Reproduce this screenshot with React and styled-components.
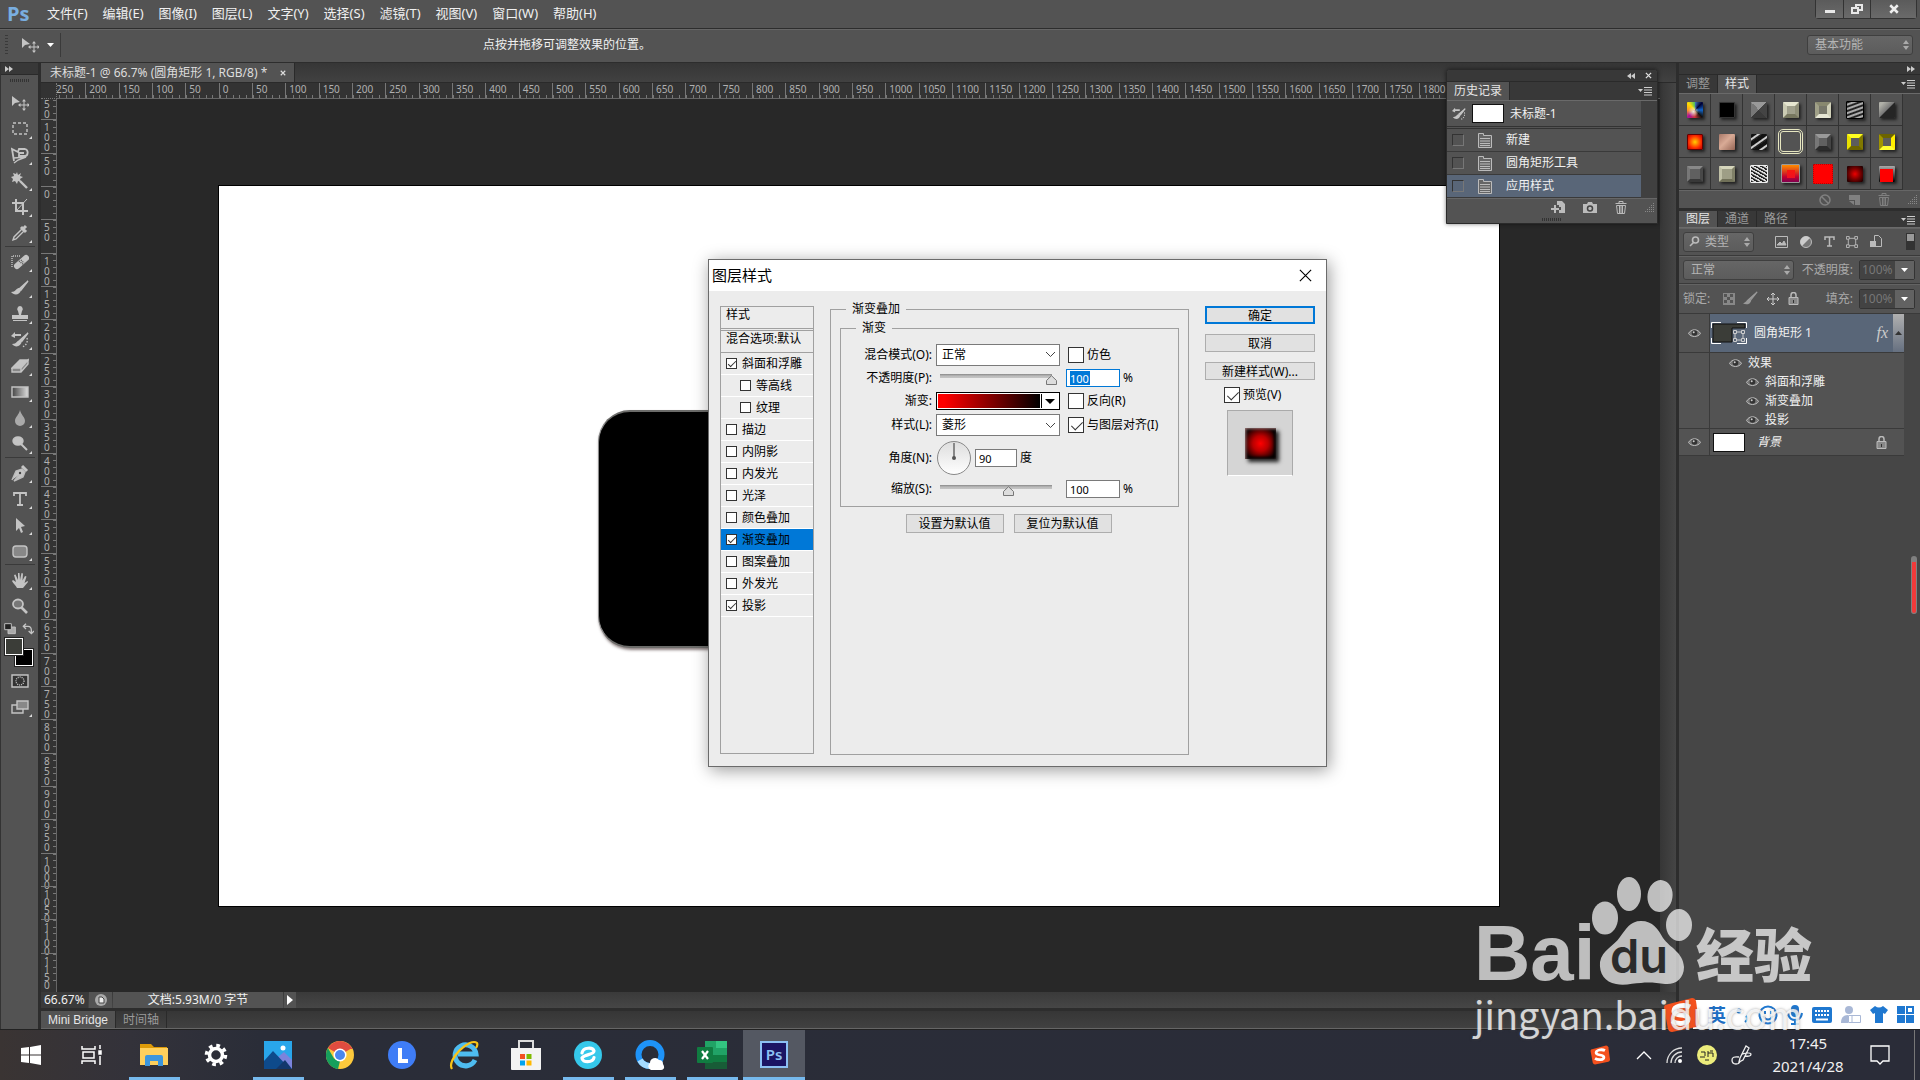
import React from "react";
import styled, { createGlobalStyle, css } from "styled-components";

const GlobalStyle = createGlobalStyle`
  * {
    box-sizing: border-box;
  }
  body {
    margin: 0;
    background: #282828;
    font-family: "Noto Sans", "Noto Sans CJK SC", sans-serif;
    font-size: 12px;
    line-height: 16px;
  }
  button, input, select {
    font: inherit;
    color: inherit;
    margin: 0;
    padding: 0;
  }
  svg {
    display: block;
    flex-shrink: 0;
  }
`;

const Page = styled.div`
  position: relative;
  display: flex;
  flex-direction: column;
  height: 100vh;
  overflow: hidden;
  color: #f0f0f0;
`;

const PlainButton = styled.button`
  display: flex;
  align-items: center;
  justify-content: center;
  border: 0;
  background: none;
  color: inherit;
`;

/* ---------- top bars ---------- */

const MenuBar = styled.header`
  display: flex;
  align-items: center;
  flex: none;
  height: 29px;
  padding-left: 7px;
  background: #535353;
  border-bottom: 1px solid #2d2d2d;
`;

const PsMark = styled.span`
  width: 40px;
  font-family: "Open Sans", sans-serif;
  font-size: 20px;
  font-weight: 700;
  line-height: 24px;
  color: #79aee0;
`;

const Menus = styled.nav`
  display: flex;
  gap: 15px;
  margin-bottom: 2px;
`;

const MenuButton = styled(PlainButton)`
  font-size: 13px;
`;

const WindowButtons = styled.div`
  display: flex;
  align-self: flex-start;
  margin-left: auto;
  margin-right: 3px;
  border: 1px solid #333;
  border-top: 0;
  border-radius: 0 0 4px 4px;
`;

const WindowButton = styled(PlainButton)`
  width: ${({ $wide }) => ($wide ? "46px" : "27px")};
  height: 18px;
  background: linear-gradient(#5b5b5b, #6a6a6a);
  & + & {
    border-left: 1px solid #333;
  }
`;

const OptionsBar = styled.div`
  display: flex;
  align-items: center;
  flex: none;
  height: 34px;
  padding: 0 7px 2px 5px;
  background: #535353;
  border-top: 1px solid #666;
  border-bottom: 1px solid #2d2d2d;
`;

const Grip = styled.span`
  width: 3px;
  height: 20px;
  background: repeating-linear-gradient(#3a3a3a 0 1px, transparent 1px 3px);
`;

const ToolPreset = styled(PlainButton)`
  gap: 8px;
  width: 53px;
  height: 24px;
  padding-left: 7px;
  border-right: 1px solid #3a3a3a;
`;

const Hint = styled.p`
  flex: 1;
  margin: 0;
  padding-left: 422px;
`;

const SelectBox = styled.span`
  position: relative;
  display: flex;
  align-items: center;
  width: ${({ $width }) => $width};
  height: ${({ $height }) => $height || "20px"};
  select {
    appearance: none;
    width: 100%;
    height: 100%;
    padding-left: ${({ $pad }) => $pad || "7px"};
    border: 1px solid #3f3f3f;
    border-radius: 3px;
    background: linear-gradient(#666, #5c5c5c);
    color: #b4b4b4;
  }
  svg {
    position: absolute;
    right: 4px;
    pointer-events: none;
  }
  svg + svg {
    right: auto;
    left: 6px;
  }
`;

/* ---------- workspace ---------- */

const Workspace = styled.main`
  display: flex;
  flex: 1;
  min-height: 0;
`;

const Toolbox = styled.aside`
  display: flex;
  flex-direction: column;
  align-items: center;
  flex: none;
  width: 41px;
  background: #535353;
  border-left: 1px solid #333;
  border-right: 3px solid #2d2d2d;
`;

const CollapseBar = styled.div`
  display: flex;
  align-items: center;
  align-self: stretch;
  justify-content: ${({ $end }) => ($end ? "flex-end" : "flex-start")};
  flex: none;
  gap: 10px;
  height: 12px;
  padding: 0 5px 0 4px;
  background: #383838;
  border-bottom: 1px solid #2a2a2a;
`;

const HGrip = styled.span`
  width: 20px;
  height: 3px;
  margin: ${({ $tight }) => ($tight ? "2px auto" : "4px 0 8px")};
  background: repeating-linear-gradient(90deg, #333 0 1px, transparent 1px 2px);
`;

const ToolButton = styled(PlainButton)`
  position: relative;
  width: 36px;
  height: 26px;
  flex: none;
  ${({ $more }) =>
    $more &&
    css`
      &::after {
        content: "";
        position: absolute;
        right: 6px;
        bottom: 3px;
        border-left: 3px solid transparent;
        border-bottom: 3px solid #ddd;
      }
    `}
`;

const ToolDivider = styled.span`
  width: 30px;
  height: 3px;
  flex: none;
  border-top: 1px solid #3a3a3a;
`;

const SwapRow = styled.div`
  display: flex;
  gap: 6px;
  height: 19px;
  align-items: center;
  align-self: flex-start;
  padding-left: 3px;
`;

const Colors = styled.div`
  display: grid;
  align-self: flex-start;
  width: 28px;
  height: 28px;
  margin: 0 0 2px 4px;
`;

const ColorChip = styled.button`
  grid-area: 1 / 1;
  width: 18px;
  height: 17px;
  border: 1px solid #fff;
  outline: 1px solid #222;
  background: ${({ $color }) => $color};
  place-self: ${({ $back }) => ($back ? "end" : "start")};
`;

const Center = styled.section`
  display: flex;
  flex-direction: column;
  flex: 1;
  min-width: 0;
  border-right: 3px solid #2d2d2d;
`;

const TabBar = styled.div`
  display: flex;
  flex: none;
  height: ${({ $height }) => $height || "20px"};
  background: linear-gradient(#363636, #414141);
  border-bottom: 1px solid ${({ $line }) => $line || "#2a2a2a"};
`;

const DocTab = styled.div`
  display: flex;
  align-items: center;
  gap: 13px;
  padding: 1px 8px 0 9px;
  background: #535353;
  border-right: 1px solid #2a2a2a;
  color: #ddd;
  white-space: nowrap;
`;

const DocBody = styled.div`
  display: grid;
  grid-template-columns: 16px 1fr 16px;
  grid-template-rows: 16px 1fr;
  flex: 1;
  min-height: 0;
`;

const RulerCorner = styled.div`
  background: #333;
  border-right: 1px dotted #777;
  border-bottom: 1px dotted #777;
`;

const RulerX = styled.div`
  overflow: hidden;
  background: #333;
  border-bottom: 1px solid #666;
`;

const MarksX = styled.div`
  display: grid;
  grid-template-columns: repeat(48, 1fr);
  width: 1600px;
  height: 15px;
  margin-left: -5px;
`;

const MarkX = styled.span`
  padding-left: 3px;
  border-left: 1px solid #777;
  background: repeating-linear-gradient(90deg, #777 0 1px, transparent 1px 20%) 0 100% / 100% 3px no-repeat;
  color: #b0b0b0;
  font-size: 10px;
  line-height: 12px;
`;

const RulerY = styled.div`
  overflow: hidden;
  background: #333;
  border-right: 1px solid #666;
`;

const MarksY = styled.div`
  display: grid;
  grid-template-rows: repeat(27, 1fr);
  height: 900px;
  margin-top: -13px;
`;

const MarkY = styled.span`
  display: flex;
  flex-direction: column;
  min-height: 0;
  padding: 2px 0 0 3px;
  border-top: 1px solid #777;
  background: repeating-linear-gradient(#777 0 1px, transparent 1px 20%) 100% 0 / 3px 100% no-repeat;
  color: #b0b0b0;
  font-size: 10px;
  line-height: 10px;
`;

const Digit = styled.span`
  height: ${({ $squeeze }) => ($squeeze ? "8px" : "10px")};
`;

const Viewport = styled.div`
  overflow: hidden;
  padding: 86px 0 0 161px;
  background: #282828;
`;

const Artboard = styled.div`
  width: 1282px;
  height: 722px;
  padding: 224px 0 0 379px;
  border: 1px solid #000;
  background: #fff;
`;

const RoundedShape = styled.div`
  width: 370px;
  height: 238px;
  border: 2px solid #6c6c6a;
  border-left: 1px solid #8a8a8a;
  border-radius: 32px;
  background: #000;
  box-shadow: 1px 2px 3px rgba(60, 40, 40, 0.6);
`;

const ScrollColumn = styled.div`
  grid-area: 1 / 3 / 3 / 4;
  background: linear-gradient(90deg, #363636, #454545);
`;

const StatusBar = styled.div`
  display: flex;
  flex: none;
  height: 19px;
  gap: 1px;
  background: linear-gradient(#3a3a3a, #464646);
  border-bottom: 3px solid #2d2d2d;
`;

const Zoom = styled.span`
  width: 47px;
  padding-left: 3px;
  background: #3a3a3a;
`;

const StatusButton = styled(PlainButton)`
  width: ${({ $width }) => $width};
  background: #535353;
`;

const SmallTab = styled.button`
  padding: 0 7px;
  border: 0;
  border-right: 1px solid #2a2a2a;
  background: ${({ $active }) => ($active ? "#535353" : "transparent")};
  color: ${({ $active }) => ($active ? "#e6e6e6" : "#9a9a9a")};
  font-family: "Liberation Sans", "Noto Sans CJK SC", sans-serif;
  white-space: nowrap;
`;

/* ---------- right dock ---------- */

const Dock = styled.aside`
  display: flex;
  flex-direction: column;
  flex: none;
  width: 241px;
  background: #464646;
`;

const PanelTabs = styled.div`
  display: flex;
  flex: none;
  height: ${({ $height }) => $height || "19px"};
  background: #383838;
  border-bottom: 1px solid #6a6a6a;
  > svg {
    margin: 5px 5px 0 auto;
  }
`;

const Panel = styled.section`
  display: flex;
  flex-direction: column;
  flex: ${({ $grow }) => ($grow ? 1 : "none")};
  border-bottom: ${({ $grow }) => ($grow ? 0 : "3px solid #2d2d2d")};
`;

const SwatchGrid = styled.div`
  display: grid;
  grid-template-columns: repeat(7, 32px);
  grid-auto-rows: 32px;
`;

const SwatchCell = styled(PlainButton)`
  border-right: 1px solid #333;
  border-bottom: 1px solid #333;
  background: #535353;
`;

const Swatch = styled.span`
  width: ${({ $size }) => $size || "16px"};
  height: ${({ $size }) => $size || "16px"};
  border: ${({ $border }) => $border || "0"};
  border-color: ${({ $edges }) => $edges};
  border-radius: ${({ $round }) => ($round ? "5px" : "1px")};
  background: ${({ $fill }) => $fill};
  box-shadow: ${({ $flat }) => ($flat ? "none" : "2px 2px 3px #222")};
`;

const PanelFooter = styled.div`
  display: flex;
  align-items: center;
  justify-content: flex-end;
  gap: 18px;
  height: 18px;
  padding-right: 2px;
  background: #535353;
  border-top: 1px solid #666;
  color: ${({ $dim }) => ($dim ? "#808080" : "#bbb")};
`;

const ControlRow = styled.div`
  display: flex;
  align-items: center;
  height: ${({ $height }) => $height};
  padding: 0 5px 1px 4px;
  background: #535353;
  border-bottom: 1px solid #3a3a3a;
  border-top: 1px solid #636363;
  color: #aaa;
  label {
    margin-left: auto;
    margin-right: 6px;
  }
`;

const FilterIcons = styled.div`
  display: flex;
  flex: 1;
  align-items: center;
  justify-content: space-between;
  padding-left: 21px;
`;

const LockIcons = styled.div`
  display: flex;
  align-items: center;
  gap: 8px;
  margin-left: 13px;
`;

const NumberCombo = styled.span`
  display: flex;
  height: 20px;
  border: 1px solid #333;
  border-radius: 2px;
  input {
    width: 35px;
    padding-left: 2px;
    border: 0;
    background: #434343;
    color: #777;
  }
  button {
    width: 19px;
    background: #626262;
  }
`;

const FilterSwitch = styled.span`
  width: 9px;
  height: 17px;
  border: 1px solid #333;
  background: linear-gradient(#999 50%, #333 50%);
`;

const LayerRows = styled.div`
  display: flex;
  flex-direction: column;
  margin-right: 16px;
  background: #535353;
`;

const LayerRow = styled.div`
  display: flex;
  align-items: stretch;
  height: ${({ $height }) => $height};
  border-bottom: 1px solid #3a3a3a;
`;

const EyeCell = styled(PlainButton)`
  width: 31px;
  border-right: 1px solid #3a3a3a;
`;

const LayerMain = styled.div`
  display: flex;
  flex: 1;
  align-items: center;
  gap: ${({ $gap }) => $gap};
  padding-left: ${({ $pad }) => $pad || "1px"};
  background: ${({ $selected }) => ($selected ? "#596678" : "transparent")};
  > :last-child {
    margin-left: auto;
  }
`;

const LayerEnd = styled.span`
  display: flex;
  align-items: center;
  align-self: stretch;
  gap: 5px;
  padding-right: ${({ $pad }) => $pad || "0"};
  font-family: "Liberation Serif", serif;
  font-size: 16px;
  font-style: italic;
  color: #ccc;
`;

const FxToggle = styled(PlainButton)`
  width: 11px;
  align-self: stretch;
  background: linear-gradient(#b0b0b0, #667080);
`;

const Thumb = styled.span`
  width: 32px;
  height: 19px;
  border: 1px solid #111;
  background: #fff;
`;

const EffectList = styled.div`
  display: flex;
  height: 76px;
  border-bottom: 1px solid #3a3a3a;
  ul {
    margin: 0 0 0 30px;
    padding: 0;
    list-style: none;
    border-left: 1px solid #3a3a3a;
  }
`;

const Effect = styled.li`
  display: flex;
  align-items: center;
  gap: 6px;
  height: 19px;
  padding-left: ${({ $child }) => ($child ? "36px" : "19px")};
`;

const RecorderPill = styled.div`
  position: absolute;
  right: 3px;
  top: 556px;
  width: 6px;
  height: 58px;
  border: 1px solid #808080;
  border-top-width: 6px;
  border-radius: 3px;
  background: #f23a3a;
`;

/* ---------- history ---------- */

const HistoryWindow = styled.section`
  position: absolute;
  left: 1446px;
  top: 69px;
  width: 212px;
  border: 1px solid #2a2a2a;
  border-radius: 4px 4px 0 0;
  background: #535353;
  box-shadow: 0 0 4px rgba(0, 0, 0, 0.5);
  overflow: hidden;
`;

const HistoryRows = styled.div`
  background: #404040;
  padding-right: 16px;
`;

const HistoryRow = styled.div`
  display: flex;
  align-items: center;
  height: ${({ $head }) => ($head ? "28px" : "23px")};
  padding-left: 5px;
  gap: ${({ $head }) => ($head ? "6px" : "14px")};
  background: ${({ $selected }) => ($selected ? "#596678" : "#535353")};
  border-bottom: ${({ $head }) => ($head ? "3px double #333" : "1px solid #3a3a3a")};
  input {
    appearance: none;
    width: 12px;
    height: 12px;
    border: 1px solid #777;
    border-top-color: #333;
    border-left-color: #333;
  }
`;

/* ---------- layer style dialog ---------- */

const Dialog = styled.section`
  position: absolute;
  left: 708px;
  top: 259px;
  width: 619px;
  border: 1px solid #6b6b6b;
  background: #ececec;
  box-shadow: 2px 3px 16px rgba(0, 0, 0, 0.4);
  color: #000;
`;

const DialogTitle = styled.div`
  display: flex;
  align-items: center;
  justify-content: space-between;
  height: 31px;
  padding: 0 13px 1px 3px;
  background: #fff;
  h2 {
    margin: 0;
    font-size: 15px;
    font-weight: 400;
  }
`;

const DialogBody = styled.div`
  display: flex;
  gap: 16px;
  padding: 10px 11px 11px;
`;

const StyleList = styled.div`
  width: 94px;
  height: 448px;
  margin-top: 5px;
  border: 1px solid #a0a0a0;
`;

const StyleHead = styled.div`
  height: ${({ $double }) => ($double ? "24px" : "22px")};
  padding-left: 5px;
  border-bottom: ${({ $double }) => ($double ? "3px double #a0a0a0" : "1px solid #a0a0a0")};
  white-space: nowrap;
`;

const Check = styled.input.attrs({ type: "checkbox" })`
  appearance: none;
  position: relative;
  flex: none;
  width: ${({ $small }) => ($small ? "11px" : "16px")};
  height: ${({ $small }) => ($small ? "11px" : "16px")};
  border: 1px solid #333;
  background: #fff;
  &:checked::after {
    content: "";
    position: absolute;
    left: ${({ $small }) => ($small ? "3px" : "5px")};
    top: ${({ $small }) => ($small ? "0" : "1px")};
    width: ${({ $small }) => ($small ? "3px" : "5px")};
    height: ${({ $small }) => ($small ? "7px" : "10px")};
    border: solid #333;
    border-width: 0 1px 1px 0;
    transform: rotate(45deg);
  }
`;

const StyleItem = styled.label`
  display: flex;
  align-items: center;
  gap: 5px;
  height: 22px;
  padding-left: ${({ $sub }) => ($sub ? "19px" : "5px")};
  border-bottom: 1px solid #fff;
  background: ${({ $active }) => ($active ? "#0078d7" : "transparent")};
  white-space: nowrap;
`;

const OuterSet = styled.fieldset`
  width: 359px;
  height: 454px;
  margin: 0;
  padding: 3px 9px 0 9px;
  border: 1px solid #a0a0a0;
  legend {
    margin-left: 15px;
    padding: 0 6px;
    line-height: 16px;
  }
  > legend {
    margin-left: 6px;
  }
`;

const InnerSet = styled.fieldset`
  margin: 0;
  padding: 7px 0 6px;
  border: 1px solid #a0a0a0;
`;

const Field = styled.div`
  display: grid;
  grid-template-columns: 91px 124px 1fr;
  column-gap: 4px;
  align-items: center;
  height: ${({ $height }) => $height};
  > :first-child {
    justify-self: end;
  }
`;

const Side = styled.label`
  display: flex;
  align-items: center;
  gap: 3px;
  padding-left: ${({ $flush }) => ($flush ? "2px" : "4px")};
  white-space: nowrap;
`;

const DialogSelect = styled(SelectBox)`
  select {
    border: 1px solid #7a7a7a;
    border-radius: 0;
    background: #fff;
    color: #000;
  }
`;

const NumberInput = styled.input`
  width: ${({ $width }) => $width || "54px"};
  height: 18px;
  padding-left: 3px;
  border: 1px solid ${({ $focused }) => ($focused ? "#0078d7" : "#7a7a7a")};
  background: ${({ $focused }) =>
    $focused ? "linear-gradient(#0078d7, #0078d7) 3px 1px / 20px 14px no-repeat #fff" : "#fff"};
  color: ${({ $focused }) => ($focused ? "#fff" : "#000")};
  font-size: 11px;
`;

const SliderBox = styled.span`
  position: relative;
  display: flex;
  width: 116px;
  margin-left: 4px;
  input {
    appearance: none;
    width: 112px;
    height: 16px;
    background: linear-gradient(#888, #bbb 2px, #c4c4c4) 0 4px / 100% 4px no-repeat;
    border-radius: 2px;
    outline: 0;
  }
  input::-webkit-slider-thumb {
    appearance: none;
    width: 11px;
    height: 11px;
    opacity: 0;
  }
  svg {
    position: absolute;
    top: 5px;
    left: ${({ $at }) => $at};
    pointer-events: none;
  }
`;

const GradientButton = styled.button`
  display: flex;
  width: 124px;
  height: 18px;
  padding: 1px;
  border: 1px solid #000;
  background: #fff;
`;

const Ramp = styled.span`
  flex: 1;
  align-self: stretch;
  background: linear-gradient(90deg, #f00 6%, #000);
`;

const RampArrow = styled.span`
  display: flex;
  align-items: center;
  justify-content: center;
  align-self: stretch;
  width: 17px;
  margin-left: 1px;
  border-left: 1px solid #000;
`;

const AngleGroup = styled.span`
  display: flex;
  align-items: center;
  gap: 3px;
  white-space: nowrap;
`;

const GrayButton = styled.button`
  height: ${({ $height }) => $height || "18px"};
  padding-top: ${({ $primary }) => ($primary ? "1px" : "2px")};
  border: ${({ $primary }) => ($primary ? "2px solid #0078d7" : "1px solid #adadad")};
  background: #e1e1e1;
  line-height: 14px;
`;

const DefaultButtons = styled.div`
  display: flex;
  justify-content: center;
  gap: 10px;
  margin-top: 7px;
  padding-right: 2px;
  button {
    width: 98px;
    padding: 0;
  }
`;

const Actions = styled.div`
  display: flex;
  flex-direction: column;
  gap: 10px;
  width: 110px;
  margin-top: 5px;
`;

const PreviewToggle = styled.label`
  display: flex;
  align-items: center;
  gap: 3px;
  margin: -3px 0 -3px 19px;
`;

const PreviewBox = styled.div`
  display: flex;
  align-items: center;
  justify-content: center;
  align-self: center;
  width: 66px;
  height: 66px;
  border: 1px solid #aaa;
  border-bottom-color: #fff;
  background: #d5d5d5;
`;

const PreviewChip = styled.span`
  width: 31px;
  height: 31px;
  background: radial-gradient(circle, #f00 0, #b00 35%, #100 80%);
  box-shadow: 3px 3px 4px #222, inset 1px 1px 3px #977, inset -2px -2px 3px #000;
`;

/* ---------- taskbar, ime and watermark ---------- */

const Taskbar = styled.footer`
  display: flex;
  flex: none;
  height: 51px;
  background: linear-gradient(90deg, #3a3433, #33323a 130px, #2a2d38 260px, #2a2c38);
  border-top: 1px solid #222;
`;

const TaskButton = styled(PlainButton)`
  width: ${({ $first }) => ($first ? "61px" : "62px")};
  height: 50px;
  padding-bottom: 1px;
  background: ${({ $active }) =>
    $active
      ? "linear-gradient(#76b9ed, #76b9ed) 50% 100% / 100% 3px no-repeat #545862"
      : "none"};
  ${({ $open }) =>
    $open &&
    css`
      background: linear-gradient(#76b9ed, #76b9ed) 50% 100% / 51px 3px no-repeat;
    `}
`;

const Tray = styled.div`
  display: flex;
  align-items: center;
  gap: 14px;
  margin-left: auto;
  padding-right: 5px;
`;

const TrayIme = styled.span`
  margin-right: 12px;
`;

const Clock = styled.time`
  display: flex;
  flex-direction: column;
  align-items: center;
  width: 80px;
  margin: 0 8px 0 2px;
  font-size: 15px;
  line-height: 23px;
`;

const ShowDesktop = styled.span`
  width: 1px;
  height: 50px;
  margin-left: 10px;
  background: #777;
`;

const ImeBar = styled.div`
  position: absolute;
  right: 0;
  bottom: 51px;
  display: flex;
  align-items: center;
  justify-content: space-between;
  width: 257px;
  height: 29px;
  padding-right: 6px;
  background: linear-gradient(90deg, transparent 30px, #fff 30px);
  color: #1f6fc4;
  font-size: 18px;
  font-weight: 700;
`;

const Watermark = styled.div`
  position: absolute;
  left: 1474px;
  bottom: 44px;
  color: rgba(255, 255, 255, 0.78);
  pointer-events: none;
`;

const WatermarkTop = styled.div`
  display: flex;
  align-items: flex-end;
  height: 112px;
  margin-bottom: 6px;
  opacity: 0.9;
`;

const Bai = styled.span`
  width: 116px;
  font-family: "Liberation Sans", sans-serif;
  font-size: 78px;
  font-weight: 700;
  line-height: 66px;
`;

const JingYan = styled.span`
  margin-left: 4px;
  font-family: "Noto Sans CJK SC", sans-serif;
  font-size: 58px;
  font-weight: 900;
  line-height: 68px;
`;

const WatermarkUrl = styled.div`
  font-family: "Noto Sans CJK SC", sans-serif;
  font-size: 38px;
  line-height: 44px;
  text-shadow: 0 0 3px rgba(90, 90, 90, 0.5);
`;

/* ---------- icons ---------- */

const Glyph = ({ size = 18, children }) => (
  <svg
    width={size}
    height={size}
    viewBox="0 0 18 18"
    fill="none"
    stroke="#c4c4c4"
    strokeWidth="1.4"
    aria-hidden="true"
  >
    {children}
  </svg>
);

const F = "#c4c4c4";

const MoveIcon = () => (
  <Glyph>
    <path d="M1 2v10l3-3 5-1z" fill={F} stroke="none" />
    <path d="M13 6v10M8 11h10" strokeWidth="1" />
    <path d="M13 5l-2 2.500h4zM13 17l-2-2.500h4zM7 11l2.500-2v4zM19 11l-2.500-2v4z" fill={F} stroke="none" />
  </Glyph>
);

const UpDown = () => (
  <svg width="6" height="10" viewBox="0 0 6 10" fill="#aaa">
    <path d="M0 4l3-4 3 4zM0 6l3 4 3-4z" />
  </svg>
);

const Magnifier = () => (
  <svg width="11" height="11" viewBox="0 0 11 11" fill="none" stroke="#bbb" strokeWidth="1.600">
    <circle cx="6.500" cy="4" r="3" />
    <path d="M4.500 6.500L1 10" />
  </svg>
);

const Down = ({ color = "#fff" }) => (
  <svg width="7" height="4" viewBox="0 0 7 4" fill={color}>
    <path d="M0 0h7L3.500 4z" />
  </svg>
);

const Chevron = () => (
  <svg width="11" height="7" viewBox="0 0 11 7" fill="none" stroke="#444">
    <path d="M1 1l4.500 4.500L10 1" />
  </svg>
);

const PanelMenu = () => (
  <svg width="14" height="9" viewBox="0 0 14 9">
    <path d="M0 2h5L2.500 5z" fill="#ccc" />
    <path d="M6 .5h8M6 3h8M6 5.500h8M6 8h8" stroke="#ccc" />
  </svg>
);

const Arrows = ({ left }) => (
  <svg width="8" height="6" viewBox="0 0 8 6" fill="#ccc">
    <path d={left ? "M4 0v6L0 3zM8 0v6L4 3z" : "M0 0v6l4-3zM4 0v6l4-3z"} />
  </svg>
);

const Cross = ({ size = 7, color = "#ddd", width = 1.5 }) => (
  <svg width={size} height={size} viewBox="0 0 8 8" stroke={color} strokeWidth={width}>
    <path d="M1 1l6 6M7 1L1 7" />
  </svg>
);

const Eye = () => (
  <svg width="13" height="10" viewBox="0 0 13 10">
    <path d="M.5 5.500C3 .5 10 .5 12.500 5.500 10 9.500 3 9.500.5 5.500z" fill="#777" stroke="#bbb" />
    <circle cx="6.500" cy="5" r="2.800" fill="#333" />
    <circle cx="5.700" cy="4.200" r="1" fill="#ccc" />
  </svg>
);

const Trash = () => (
  <svg width="12" height="13" viewBox="0 0 12 13" fill="none" stroke="currentColor">
    <path d="M.5 2.500h11M4 2V.5h4V2M1.500 4.500l1 8h7l1-8zM4.500 5v7M6 5v7M7.500 5v7" />
  </svg>
);

const Resize = () => (
  <svg width="10" height="10" viewBox="0 0 10 10" fill="#888">
    <path d="M8 0h1v1H8zM6 2h1v1H6zM8 2h1v1H8zM4 4h1v1H4zM6 4h1v1H6zM8 4h1v1H8zM2 6h1v1H2zM4 6h1v1H4zM6 6h1v1H6zM8 6h1v1H8zM0 8h1v1H0zM2 8h1v1H2zM4 8h1v1H4zM6 8h1v1H6zM8 8h1v1H8z" />
  </svg>
);

const Lock = () => (
  <svg width="11" height="13" viewBox="0 0 11 13" fill="none" stroke="#bbb">
    <path d="M3 5V3a2.500 2.500 0 0 1 5 0v2" strokeWidth="1.500" />
    <path d="M1 5.500h9v7H1z" fill="#888" />
    <path d="M5 8h1v3H5z" fill="#333" stroke="none" />
  </svg>
);

const VectorBox = ({ size = 13 }) => (
  <svg width={size} height={size} viewBox="0 0 13 13" fill="none" stroke="#bbb">
    <path d="M2.500 2.500h8v8h-8z" />
    <path d="M.5.5h3v3h-3zM9.500.5h3v3h-3zM.5 9.500h3v3h-3zM9.500 9.500h3v3h-3z" fill="#535353" />
  </svg>
);

const SliderHandle = () => (
  <svg width="11" height="10" viewBox="0 0 11 10" fill="#ddd" stroke="#777">
    <path d="M5.500.7L10.500 5.500v4H.5v-4z" />
  </svg>
);

const HistoryDoc = () => (
  <svg width="14" height="15" viewBox="0 0 14 15" fill="none" stroke="#bbb">
    <path d="M.5.500h5v2h8v12H.5z" fill="#666" />
    <path d="M2 5.500h10M2 8h10M2 10.500h10M2 12.500h10" />
  </svg>
);

const HistoryBrush = ({ size = 18 }) => (
  <Glyph size={size}>
    <path d="M17 2L9 9l2 1z" fill={F} />
    <path d="M9 9c-3 0-3 4-8 4 3 4 9 3 10-3z" fill={F} stroke="none" />
    <path d="M0 5l4-4v2h6v2H4v2z" fill={F} stroke="none" />
    <path d="M16 7c1 4-1 8-5 9" strokeDasharray="1.500 1.500" />
  </Glyph>
);

const toolGroups = [
  [
    { name: "移动", icon: <MoveIcon />, single: true },
    {
      name: "选框",
      icon: (
        <Glyph>
          <path d="M2 3h14v11H2z" strokeDasharray="3 2" />
        </Glyph>
      ),
    },
    {
      name: "套索",
      icon: (
        <Glyph>
          <path d="M3 15L1 3l6 3 1-3h6c4 1 3 7 0 7H8V7h5" strokeWidth="1.800" />
          <path d="M3 12l12-1-8 3-4 3" />
        </Glyph>
      ),
    },
    {
      name: "魔棒",
      icon: (
        <Glyph>
          <path d="M6 0l1 3 3-2-1 3 3 1-3 2 1 3-3-1-1 3-2-3-3 1 1-3-2-2 3-1-1-3 3 1z" fill={F} stroke="none" />
          <path d="M9 9l7 7" strokeWidth="2.400" />
        </Glyph>
      ),
    },
    {
      name: "裁剪",
      icon: (
        <Glyph>
          <path d="M5 1v12h12M1 5h11v12" strokeWidth="2" />
          <path d="M6 12L16 1" strokeWidth="1" />
        </Glyph>
      ),
    },
    {
      name: "吸管",
      icon: (
        <Glyph>
          <path d="M2 16l1-3 8-8 2 2-8 8z" />
          <path d="M10 3l5 5M12 5l3-3" strokeWidth="3" />
        </Glyph>
      ),
    },
  ],
  [
    {
      name: "修复画笔",
      icon: (
        <Glyph>
          <path d="M6 13L15 5" strokeWidth="6" strokeLinecap="round" />
          <path d="M8 8l5 4M10 7l3 3" stroke="#555" strokeDasharray="1 1" />
          <path d="M9 3H1v12" strokeDasharray="1 1" />
        </Glyph>
      ),
    },
    {
      name: "画笔",
      icon: (
        <Glyph>
          <path d="M17 2L8 10l2 1z" fill={F} />
          <path d="M8 9c-3 0-3 4-8 4 3 4 9 3 10-2z" fill={F} stroke="none" />
        </Glyph>
      ),
    },
    {
      name: "图章",
      icon: (
        <Glyph>
          <path d="M9 1a3 3 0 0 1 2 5l-1 4h7v4H1v-4h7L7 6a3 3 0 0 1 2-5zM2 15h14v1H2z" fill={F} stroke="none" />
        </Glyph>
      ),
    },
    { name: "历史记录画笔", icon: <HistoryBrush /> },
    {
      name: "橡皮擦",
      icon: (
        <Glyph>
          <path d="M1 11l8-8h8l-7 8z" fill={F} />
          <path d="M1 11v4h9l7-8V3l-7 8H1M10 11v4" fill="#888" />
        </Glyph>
      ),
    },
    {
      name: "渐变",
      icon: (
        <Glyph>
          <defs>
            <linearGradient id="tool-ramp">
              <stop stopColor="#444" />
              <stop offset="1" stopColor="#ddd" />
            </linearGradient>
          </defs>
          <path d="M1 4h16v10H1z" fill="url(#tool-ramp)" />
        </Glyph>
      ),
    },
    {
      name: "模糊",
      icon: (
        <Glyph>
          <path d="M9 1c1 5 5 7 5 11a5 5 0 0 1-10 0c0-4 4-6 5-11z" fill="#aaa" stroke="none" />
        </Glyph>
      ),
    },
    {
      name: "减淡",
      icon: (
        <Glyph>
          <ellipse cx="7" cy="6" rx="5" ry="4" fill={F} />
          <path d="M10 9l6 6" strokeWidth="2" />
        </Glyph>
      ),
    },
  ],
  [
    {
      name: "钢笔",
      icon: (
        <Glyph>
          <path d="M1 16l4-9 6-2 3 3-2 5-9 4 5-6" fill={F} stroke="#bbb" />
          <path d="M11 2l5 5" strokeWidth="3" />
          <circle cx="9" cy="9" r="1.200" fill="#444" stroke="none" />
        </Glyph>
      ),
    },
    {
      name: "文字",
      icon: (
        <Glyph>
          <path d="M3 6V3h12v3M9 3v12M6 15h6" strokeWidth="1.800" />
        </Glyph>
      ),
    },
    {
      name: "路径选择",
      icon: (
        <Glyph>
          <path d="M5 2l9 8-4 1 2 5-2 1-2-5-3 3z" fill={F} stroke="none" />
        </Glyph>
      ),
    },
    {
      name: "圆角矩形",
      icon: (
        <Glyph>
          <rect x="2" y="4" width="14" height="11" rx="3" fill="#888" />
        </Glyph>
      ),
    },
  ],
  [
    {
      name: "抓手",
      icon: (
        <Glyph>
          <path
            d="M6 17c-1-2-4-5-5-7l1-1 3 2-2-7 1.500-.5L7 9V2h1.500L9 9l1.500-7 1.500.5-.5 7L14 5l1.500.5L13.500 12l3-2 .5 1-5 6z"
            fill={F}
            stroke="none"
          />
        </Glyph>
      ),
    },
    {
      name: "缩放",
      icon: (
        <Glyph>
          <ellipse cx="7" cy="7" rx="5" ry="4.500" fill="#777" strokeWidth="1.800" />
          <path d="M10 10l6 6" strokeWidth="2.600" />
        </Glyph>
      ),
      single: true,
    },
  ],
];

const bevel = (a, b, c, d) => `conic-gradient(from 45deg, ${a} 25%, ${b} 25% 50%, ${c} 50% 75%, ${d} 75%)`;

const swatches = [
  { fill: "radial-gradient(circle at 40% 60%, #eec, transparent 40%), conic-gradient(#47b, #003, #16c, #111, #c33, #a19, #f92, #fd0, #4b6)" },
  { fill: "#000", border: "1px solid #333" },
  { fill: bevel("#444", "#3a3a3a", "#777", "#999") },
  { fill: "#a0a08c", border: "4px solid", edges: "#e6e6d0 #8f8f78 #77775f #ccccb4" },
  { fill: "#77776a", border: "4px solid", edges: "#88886f #d0d0b8 #e6e6d4 #a0a088" },
  { fill: "repeating-linear-gradient(160deg, #222 0 1px, #aaa 2px 3px, #333 4px)", border: "1px solid #000", size: "18px" },
  { fill: "linear-gradient(135deg, #b0b0a8 15%, #777 48%, #252525 52%)" },
  { fill: "radial-gradient(#ffd000, #ff3000 60%, #b00)", border: "1px solid #600" },
  { fill: "linear-gradient(135deg, #a87868, #d9ab96 45%, #946454)" },
  { fill: "repeating-linear-gradient(145deg, #111 0 3px, #ccc 4px 5px, #222 6px 7px)" },
  { fill: "#535353", border: "3px double #e6e6c0", size: "25px", flat: true, round: true },
  { fill: "#606060", border: "4px solid", edges: "#999 #444 #2c2c2c #777" },
  { fill: "#5c5c5c", border: "4px solid", edges: "#ffff20 #807800 #6c6400 #e8e000" },
  { fill: "#5c5c5c", border: "4px solid", edges: "#6c6400 #ffee00 #ffff30 #a09400" },
  { fill: "#606060", border: "3px solid", edges: "#888 #484848 #383838 #777" },
  { fill: "#9e9e86", border: "3px solid", edges: "#d6d6bc #808068 #707058 #c0c0a6" },
  { fill: "repeating-linear-gradient(30deg, #222 0 1px, #ddd 2px 3px)", border: "1px solid #eee", size: "18px", flat: true },
  { fill: "linear-gradient(#f81810, #f01020) 50% / 8px 8px no-repeat, linear-gradient(#ff8c00, #c00030 70%, #800050)", border: "1px solid #999", size: "19px" },
  { fill: "#f00", border: "1px dotted #b00", size: "20px", flat: true },
  { fill: "radial-gradient(#e00, #700 50%, #100)" },
  { fill: "linear-gradient(#f00, #f00) 50% 100% / 13px 13px no-repeat, linear-gradient(#aaa, #000)" },
];

const styleItems = [
  { label: "斜面和浮雕", on: true },
  { label: "等高线", sub: true },
  { label: "纹理", sub: true },
  { label: "描边" },
  { label: "内阴影" },
  { label: "内发光" },
  { label: "光泽" },
  { label: "颜色叠加" },
  { label: "渐变叠加", on: true, active: true },
  { label: "图案叠加" },
  { label: "外发光" },
  { label: "投影", on: true },
];

const menus = ["文件(F)", "编辑(E)", "图像(I)", "图层(L)", "文字(Y)", "选择(S)", "滤镜(T)", "视图(V)", "窗口(W)", "帮助(H)"];

const xMarks = Array.from({ length: 48 }, (_, i) => Math.abs(i * 50 - 250));
const yMarks = Array.from({ length: 27 }, (_, i) => Math.abs(i * 50 - 150));

const Sogou = ({ size }) => (
  <svg width={size} height={size} viewBox="0 0 36 36">
    <path d="M2 8L29 1q3 0 4 3l3 22q0 3-3 4L9 35q-3 0-4-3L1 11q0-2 1-3z" fill="#f4511e" />
    <path d="M27 10c-6-3-16-1-16 4 0 6 14 2 14 8 0 5-10 6-16 2" fill="none" stroke="#fff" strokeWidth="5" />
  </svg>
);

const tasks = [
  {
    name: "开始",
    icon: (
      <svg width="20" height="20" viewBox="0 0 20 20" fill="#fff">
        <path d="M0 3l8-1v7.500H0zM9 2l11-2v9.500H9zM0 10.500h8V18l-8-1zM9 10.500h11V20L9 18z" />
      </svg>
    ),
  },
  {
    name: "任务视图",
    icon: (
      <svg width="22" height="20" viewBox="0 0 22 20" fill="none" stroke="#fff" strokeWidth="1.500">
        <path d="M1 1v3h13V1M1 19v-3h13v3M2 7h11v6H2zM19 0v4M19 11v9" />
        <path d="M18 6h2v3h-2z" fill="#fff" />
      </svg>
    ),
  },
  {
    name: "文件资源管理器",
    open: true,
    icon: (
      <svg width="28" height="24" viewBox="0 0 28 24">
        <path d="M0 1h11l3 3h13v8H0z" fill="#dd9a08" />
        <path d="M0 5h28v17H0z" fill="#ffd05c" />
        <path d="M5 23V14q0-2 2-2h14q2 0 2 2v9h-5v-5h-8v5z" fill="#3d96dc" />
      </svg>
    ),
  },
  {
    name: "设置",
    icon: (
      <svg width="24" height="24" viewBox="0 0 24 24" fill="none" stroke="#fff">
        <circle cx="12" cy="12" r="6.500" strokeWidth="3.500" />
        <circle cx="12" cy="12" r="9.500" strokeWidth="3.500" strokeDasharray="3.700 3.760" />
      </svg>
    ),
  },
  {
    name: "照片",
    open: true,
    icon: (
      <svg width="28" height="28" viewBox="0 0 28 28">
        <path d="M0 0h28v28H0z" fill="#29a6ea" />
        <path d="M14 16l6-5 8 8v9H14z" fill="#7b83dc" />
        <path d="M0 20L9 10l17 18H0z" fill="#0e4a8b" />
        <path d="M12 28l9-9 7 9z" fill="#12376c" />
        <circle cx="19" cy="7" r="2.500" fill="#fff" />
      </svg>
    ),
  },
  {
    name: "Chrome",
    icon: (
      <svg width="28" height="28" viewBox="0 0 28 28">
        <circle cx="14" cy="14" r="14" fill="#fdc93c" />
        <path d="M14 14L1.900 7A14 14 0 0 1 26.100 7z" fill="#df4c40" />
        <path d="M14 7h12.500l-.4 1H14z" fill="#df4c40" />
        <path d="M1.900 7L8 17.500 14 20l-2 8A14 14 0 0 1 1.900 7z" fill="#169f5c" />
        <circle cx="14" cy="14" r="6.500" fill="#fff" />
        <circle cx="14" cy="14" r="5" fill="#4b87ee" />
      </svg>
    ),
  },
  {
    name: "L",
    icon: (
      <svg width="28" height="28" viewBox="0 0 28 28">
        <circle cx="14" cy="14" r="14" fill="#3f7df6" />
        <path d="M12 7v13h8" fill="none" stroke="#fff" strokeWidth="4" />
      </svg>
    ),
  },
  {
    name: "Internet Explorer",
    icon: (
      <svg width="30" height="30" viewBox="0 0 30 30" fill="none">
        <path d="M26 20a10.500 10.500 0 1 1 1-6H9" stroke="#4ebcf0" strokeWidth="5" />
        <path d="M3 29C-3 20 21-3 28 3q1 2-1 5" stroke="#f8c418" strokeWidth="2.200" />
      </svg>
    ),
  },
  {
    name: "Microsoft Store",
    icon: (
      <svg width="30" height="30" viewBox="0 0 30 30">
        <path d="M8 10V1h14v9" fill="none" stroke="#ddd" strokeWidth="2" />
        <path d="M0 8h30v21q0 1-1 1H1q-1 0-1-1z" fill="#f3f3f3" />
        <path d="M9 14h5v5H9z" fill="#f25022" />
        <path d="M15.500 14h5v5h-5z" fill="#7fba00" />
        <path d="M9 20.500h5v5H9z" fill="#00a4ef" />
        <path d="M15.500 20.500h5v5h-5z" fill="#ffb900" />
      </svg>
    ),
  },
  {
    name: "2345",
    open: true,
    icon: (
      <svg width="28" height="28" viewBox="0 0 28 28">
        <circle cx="14" cy="14" r="14" fill="#35c8ea" />
        <path d="M8 12c1-6 11-6 12-2 0 4-10 3-12 7 0 5 11 5 12-.5" fill="none" stroke="#fff" strokeWidth="3.200" strokeLinecap="round" />
      </svg>
    ),
  },
  {
    name: "QQ浏览器",
    open: true,
    icon: (
      <svg width="30" height="30" viewBox="0 0 30 30">
        <circle cx="15" cy="14.500" r="11.500" fill="none" stroke="#1e93f8" strokeWidth="6" />
        <path d="M5 20a11.500 11.500 0 0 0 10 6" fill="none" stroke="#a5dcff" strokeWidth="6" />
        <path d="M16 30a4 4 0 0 1-1-7 5 5 0 0 1 9-3q4 0 4 4 3 5-2 6z" fill="#fff" />
      </svg>
    ),
  },
  {
    name: "Excel",
    open: true,
    icon: (
      <svg width="30" height="28" viewBox="0 0 30 28">
        <path d="M8 0h22v28H8z" fill="#21a366" />
        <path d="M19 0h11v7H19z" fill="#33c481" />
        <path d="M8 14h22v7H8z" fill="#107c41" />
        <path d="M8 21h22v7H8z" fill="#185c37" />
        <path d="M1 6h14q1 0 1 1v14q0 1-1 1H1q-1 0-1-1V7q0-1 1-1z" fill="#107c41" />
        <path d="M5 10l6 8M11 10l-6 8" stroke="#fff" strokeWidth="2.200" />
      </svg>
    ),
  },
];

const PsTile = styled.span`
  width: 28px;
  height: 27px;
  border: 2px solid #8cc0f4;
  background: #1b1464;
  color: #8cc0f4;
  font-size: 15px;
  font-weight: 600;
  line-height: 22px;
  text-align: center;
`;

const Header = () => (
  <>
    <MenuBar>
      <PsMark>Ps</PsMark>
      <Menus>
        {menus.map((m) => (
          <MenuButton key={m}>{m}</MenuButton>
        ))}
      </Menus>
      <WindowButtons>
        <WindowButton aria-label="最小化">
          <svg width="10" height="10" viewBox="0 0 10 10" fill="#e8e8e8">
            <path d="M0 6h10v3H0z" />
          </svg>
        </WindowButton>
        <WindowButton aria-label="还原">
          <svg width="12" height="10" viewBox="0 0 12 10" fill="none" stroke="#e8e8e8" strokeWidth="2">
            <path d="M5 4V1h6v5H8M1 4h6v5H1z" />
          </svg>
        </WindowButton>
        <WindowButton $wide aria-label="关闭">
          <Cross size={10} color="#eee" width={2} />
        </WindowButton>
      </WindowButtons>
    </MenuBar>
    <OptionsBar>
      <Grip />
      <ToolPreset aria-label="移动工具">
        <MoveIcon />
        <Down />
      </ToolPreset>
      <Hint>点按并拖移可调整效果的位置。</Hint>
      <SelectBox $width="106px">
        <select aria-label="工作区">
          <option>基本功能</option>
        </select>
        <UpDown />
      </SelectBox>
    </OptionsBar>
  </>
);

const Tools = () => (
  <Toolbox>
    <CollapseBar>
      <Arrows />
    </CollapseBar>
    <HGrip />
    {toolGroups.map((group, i) => (
      <React.Fragment key={i}>
        {i > 0 && <ToolDivider />}
        {group.map((t) => (
          <ToolButton key={t.name} aria-label={t.name} $more={!t.single}>
            {t.icon}
          </ToolButton>
        ))}
      </React.Fragment>
    ))}
    <SwapRow>
      <Glyph size={12}>
        <path d="M6 6h11v10H6z" fill="#aaa" />
        <path d="M1 1h10v9H1z" fill="#222" />
      </Glyph>
      <Glyph size={12}>
        <path d="M3 5h6q5 0 5 6v4M6 1L2 5l4 4M10 12l4 4 4-4" strokeWidth="2" />
      </Glyph>
    </SwapRow>
    <Colors>
      <ColorChip $back $color="#000" aria-label="背景色" />
      <ColorChip $color="#3b3d38" aria-label="前景色" />
    </Colors>
    <ToolButton aria-label="快速蒙版">
      <Glyph>
        <path d="M1 3h16v12H1z" fill="#333" />
        <circle cx="9" cy="9" r="4" strokeDasharray="1 1" />
      </Glyph>
    </ToolButton>
    <ToolButton $more aria-label="屏幕模式">
      <Glyph>
        <path d="M1 7h11v8H1z" fill="#555" />
        <path d="M6 3h11v8H6z" fill="#888" />
      </Glyph>
    </ToolButton>
  </Toolbox>
);

const Document = () => (
  <Center>
    <TabBar>
      <DocTab>
        未标题-1 @ 66.7% (圆角矩形 1, RGB/8) *
        <Cross size={6} />
      </DocTab>
    </TabBar>
    <DocBody>
      <RulerCorner />
      <RulerX>
        <MarksX>
          {xMarks.map((n, i) => (
            <MarkX key={i}>{n}</MarkX>
          ))}
        </MarksX>
      </RulerX>
      <RulerY>
        <MarksY>
          {yMarks.map((n, i) => (
            <MarkY key={i}>
              {String(n)
                .split("")
                .map((d, k) => (
                  <Digit key={k} $squeeze={n >= 1000}>
                    {d}
                  </Digit>
                ))}
            </MarkY>
          ))}
        </MarksY>
      </RulerY>
      <Viewport>
        <Artboard>
          <RoundedShape />
        </Artboard>
      </Viewport>
      <ScrollColumn />
    </DocBody>
    <StatusBar>
      <Zoom>66.67%</Zoom>
      <StatusButton $width="23px" aria-label="共享">
        <svg width="12" height="12" viewBox="0 0 12 12">
          <circle cx="6" cy="6" r="6" fill="#aaa" />
          <path d="M4 3h3l2 2v4H4z" fill="#eee" stroke="#444" />
        </svg>
      </StatusButton>
      <StatusButton $width="170px">文档:5.93M/0 字节</StatusButton>
      <StatusButton $width="12px" aria-label="状态选项">
        <svg width="6" height="10" viewBox="0 0 6 10" fill="#fff">
          <path d="M0 0l6 5-6 5z" />
        </svg>
      </StatusButton>
    </StatusBar>
    <TabBar $height="18px" $line="#666">
      <SmallTab $active>Mini Bridge</SmallTab>
      <SmallTab>时间轴</SmallTab>
    </TabBar>
  </Center>
);

const LayersPanel = () => (
  <Panel $grow>
    <PanelTabs $height="17px">
      <SmallTab $active>图层</SmallTab>
      <SmallTab>通道</SmallTab>
      <SmallTab>路径</SmallTab>
      <PanelMenu />
    </PanelTabs>
    <ControlRow $height="28px">
      <SelectBox $width="71px" $pad="21px">
        <select aria-label="过滤">
          <option>类型</option>
        </select>
        <UpDown />
        <Magnifier />
      </SelectBox>
      <FilterIcons>
        <svg width="13" height="12" viewBox="0 0 13 12" fill="none" stroke="#bbb">
          <path d="M.5.5h12v11H.5z" />
          <path d="M2 9l3-3 2 2 2-3 2 4z" fill="#bbb" />
        </svg>
        <svg width="12" height="12" viewBox="0 0 12 12">
          <circle cx="6" cy="6" r="5.500" fill="#777" stroke="#bbb" />
          <path d="M2 10A5.500 5.500 0 0 1 10 2z" fill="#ccc" />
        </svg>
        <svg width="11" height="11" viewBox="0 0 11 11" fill="none" stroke="#bbb" strokeWidth="1.500">
          <path d="M1 4V1h9v3M5.500 1v9M3 10h5" />
        </svg>
        <VectorBox size={12} />
        <svg width="12" height="13" viewBox="0 0 12 13" fill="none" stroke="#bbb">
          <path d="M4.500 6V.5h4l3 3v8H6" />
          <path d="M0 6h6v6H0z" fill="#bbb" stroke="none" />
        </svg>
        <span />
        <FilterSwitch />
      </FilterIcons>
    </ControlRow>
    <ControlRow $height="28px">
      <SelectBox $width="111px">
        <select aria-label="混合模式">
          <option>正常</option>
        </select>
        <UpDown />
      </SelectBox>
      <label htmlFor="layer-opacity">不透明度:</label>
      <NumberCombo>
        <input id="layer-opacity" defaultValue="100%" />
        <PlainButton aria-label="不透明度滑块">
          <Down />
        </PlainButton>
      </NumberCombo>
    </ControlRow>
    <ControlRow $height="30px">
      <span>锁定:</span>
      <LockIcons>
        <svg width="12" height="12" viewBox="0 0 12 12">
          <path d="M0 0h12v12H0z" fill="#888" />
          <path d="M1 1h3v3H1zM7 1h3v3H7zM4 4h3v3H4zM1 7h3v3H1zM7 7h3v3H7z" fill="#555" />
        </svg>
        <Glyph size={15}>
          <path d="M17 1L8 9l2 1z" fill="#999" stroke="#999" />
          <path d="M8 9c-3 0-3 4-8 6 4 2 9 1 10-4z" fill="#999" stroke="none" />
        </Glyph>
        <svg width="14" height="14" viewBox="0 0 14 14" fill="none" stroke="#ccc">
          <path d="M7 1v12M1 7h12M5 3l2-2 2 2M5 11l2 2 2-2M3 5L1 7l2 2M11 5l2 2-2 2" />
        </svg>
        <Lock />
      </LockIcons>
      <label htmlFor="layer-fill">填充:</label>
      <NumberCombo>
        <input id="layer-fill" defaultValue="100%" />
        <PlainButton aria-label="填充滑块">
          <Down />
        </PlainButton>
      </NumberCombo>
    </ControlRow>
    <LayerRows>
      <LayerRow $height="39px">
        <EyeCell aria-label="显示图层">
          <Eye />
        </EyeCell>
        <LayerMain $selected $gap="7px">
          <svg width="36" height="22" viewBox="0 0 36 22" fill="none">
            <path d="M2 2h32v4H21v14H2z" fill="#3b3d38" stroke="#111" />
            <path d="M.5 6V.5H10M26 .5h9.500V6M.5 16v5.500H10M26 21.500h9.500V16" stroke="#fff" />
            <path d="M24 10h8v8h-8z" stroke="#ccc" />
            <path d="M22.500 8.500h3v3h-3zM30.500 8.500h3v3h-3zM22.500 16.500h3v3h-3zM30.500 16.500h3v3h-3z" fill="#596678" stroke="#ccc" />
          </svg>
          <span>圆角矩形 1</span>
          <LayerEnd>
            fx
            <FxToggle aria-label="折叠效果">
              <svg width="7" height="4" viewBox="0 0 7 4" fill="#333">
                <path d="M0 4h7L3.500 0z" />
              </svg>
            </FxToggle>
          </LayerEnd>
        </LayerMain>
      </LayerRow>
      <EffectList>
        <ul>
          <Effect>
            <Eye />
            效果
          </Effect>
          {["斜面和浮雕", "渐变叠加", "投影"].map((e) => (
            <Effect key={e} $child>
              <Eye />
              {e}
            </Effect>
          ))}
        </ul>
      </EffectList>
      <LayerRow $height="27px">
        <EyeCell aria-label="显示背景">
          <Eye />
        </EyeCell>
        <LayerMain $gap="12px" $pad="3px">
          <Thumb />
          <em>背景</em>
          <LayerEnd $pad="17px">
            <Lock />
          </LayerEnd>
        </LayerMain>
      </LayerRow>
    </LayerRows>
  </Panel>
);

const RightDock = () => (
  <Dock>
    <CollapseBar $end>
      <Arrows />
    </CollapseBar>
    <Panel>
      <PanelTabs>
        <SmallTab>调整</SmallTab>
        <SmallTab $active>样式</SmallTab>
        <PanelMenu />
      </PanelTabs>
      <SwatchGrid>
        {swatches.map((s, i) => (
          <SwatchCell key={i} aria-label={`样式 ${i + 1}`}>
            <Swatch $fill={s.fill} $border={s.border} $edges={s.edges} $size={s.size} $flat={s.flat} $round={s.round} />
          </SwatchCell>
        ))}
      </SwatchGrid>
      <PanelFooter $dim>
        <svg width="12" height="12" viewBox="0 0 12 12" fill="none" stroke="currentColor" strokeWidth="1.500">
          <circle cx="6" cy="6" r="5" />
          <path d="M2.500 2.500l7 7" />
        </svg>
        <svg width="11" height="11" viewBox="0 0 11 11" fill="currentColor">
          <path d="M0 1h11v10H6V6H0zM0 7h5v4z" />
        </svg>
        <Trash />
        <Resize />
      </PanelFooter>
    </Panel>
    <LayersPanel />
  </Dock>
);

const History = () => (
  <HistoryWindow>
    <CollapseBar $end>
      <Arrows left />
      <Cross size={7} />
    </CollapseBar>
    <PanelTabs>
      <SmallTab $active>历史记录</SmallTab>
      <PanelMenu />
    </PanelTabs>
    <HistoryRows>
      <HistoryRow $head>
        <HistoryBrush size={14} />
        <Thumb />
        <span>未标题-1</span>
      </HistoryRow>
      {["新建", "圆角矩形工具", "应用样式"].map((name, i) => (
        <HistoryRow key={name} $selected={i === 2}>
          <input type="checkbox" aria-label={name} />
          <HistoryDoc />
          <span>{name}</span>
        </HistoryRow>
      ))}
    </HistoryRows>
    <PanelFooter>
      <svg width="14" height="13" viewBox="0 0 14 13" fill="#bbb">
        <path d="M6 0h5l3 3v9H8V9h2V6H8V4H6zM3 4h2v3h3v2H5v3H3V9H0V7h3z" />
      </svg>
      <svg width="14" height="11" viewBox="0 0 14 11" fill="#bbb">
        <path d="M0 2h4l1-2h4l1 2h4v9H0z" />
        <circle cx="7" cy="6.500" r="2.500" stroke="#444" strokeWidth="1.500" />
      </svg>
      <Trash />
      <Resize />
    </PanelFooter>
    <HGrip as="div" $tight />
  </HistoryWindow>
);

const LayerStyle = () => (
  <Dialog role="dialog" aria-labelledby="dialog-title">
    <DialogTitle>
      <h2 id="dialog-title">图层样式</h2>
      <PlainButton aria-label="关闭">
        <Cross size={15} color="#000" width={0.6} />
      </PlainButton>
    </DialogTitle>
    <DialogBody>
      <StyleList>
        <StyleHead $double>样式</StyleHead>
        <StyleHead>混合选项:默认</StyleHead>
        {styleItems.map((s) => (
          <StyleItem key={s.label} $sub={s.sub} $active={s.active}>
            <Check $small defaultChecked={s.on} />
            {s.label}
          </StyleItem>
        ))}
      </StyleList>
      <OuterSet>
        <legend>渐变叠加</legend>
        <InnerSet>
          <legend>渐变</legend>
          <Field $height="23px">
            <label htmlFor="mode">混合模式(O):</label>
            <DialogSelect $width="124px" $height="22px" $pad="5px">
              <select id="mode">
                <option>正常</option>
              </select>
              <Chevron />
            </DialogSelect>
            <Side>
              <Check />
              仿色
            </Side>
          </Field>
          <Field $height="24px">
            <label htmlFor="opacity">不透明度(P):</label>
            <SliderBox $at="106px">
              <input type="range" aria-label="不透明度" defaultValue="100" />
              <SliderHandle />
            </SliderBox>
            <Side $flush>
              <NumberInput id="opacity" defaultValue="100" $focused />%
            </Side>
          </Field>
          <Field $height="22px">
            <label htmlFor="ramp">渐变:</label>
            <GradientButton id="ramp">
              <Ramp />
              <RampArrow>
                <svg width="10" height="5" viewBox="0 0 10 5">
                  <path d="M0 0h10L5 5z" />
                </svg>
              </RampArrow>
            </GradientButton>
            <Side>
              <Check />
              反向(R)
            </Side>
          </Field>
          <Field $height="26px">
            <label htmlFor="shape">样式(L):</label>
            <DialogSelect $width="124px" $height="22px" $pad="5px">
              <select id="shape">
                <option>菱形</option>
              </select>
              <Chevron />
            </DialogSelect>
            <Side>
              <Check defaultChecked />
              与图层对齐(I)
            </Side>
          </Field>
          <Field $height="40px">
            <label htmlFor="angle">角度(N):</label>
            <AngleGroup>
              <svg width="36" height="36" viewBox="0 0 36 36">
                <defs>
                  <linearGradient id="dial" x2="0" y2="1">
                    <stop stopColor="#ddd" />
                    <stop offset="1" stopColor="#fff" />
                  </linearGradient>
                </defs>
                <circle cx="18" cy="18" r="16.500" fill="url(#dial)" stroke="#888" />
                <path d="M18 3v15" stroke="#888" strokeWidth="2" />
                <circle cx="18" cy="18" r="2" fill="#555" />
              </svg>
              <NumberInput id="angle" defaultValue="90" $width="42px" />度
            </AngleGroup>
          </Field>
          <Field $height="22px">
            <label htmlFor="scale">缩放(S):</label>
            <SliderBox $at="63px">
              <input type="range" aria-label="缩放" defaultValue="60" />
              <SliderHandle />
            </SliderBox>
            <Side $flush>
              <NumberInput id="scale" defaultValue="100" />%
            </Side>
          </Field>
        </InnerSet>
        <DefaultButtons>
          <GrayButton $height="19px">设置为默认值</GrayButton>
          <GrayButton $height="19px">复位为默认值</GrayButton>
        </DefaultButtons>
      </OuterSet>
      <Actions>
        <GrayButton $primary>确定</GrayButton>
        <GrayButton>取消</GrayButton>
        <GrayButton>新建样式(W)...</GrayButton>
        <PreviewToggle>
          <Check defaultChecked />
          预览(V)
        </PreviewToggle>
        <PreviewBox>
          <PreviewChip />
        </PreviewBox>
      </Actions>
    </DialogBody>
  </Dialog>
);

const Ime = () => (
  <ImeBar>
    <Sogou size={36} />
    <span>英</span>
    <svg width="14" height="16" viewBox="0 0 14 16" fill="none" stroke="#1f78d0" strokeWidth="2">
      <circle cx="4" cy="4" r="1.500" fill="#1f78d0" />
      <path d="M11 9q3 3-1 6" />
    </svg>
    <svg width="20" height="20" viewBox="0 0 20 20" fill="none" stroke="#1f78d0" strokeWidth="2">
      <circle cx="10" cy="10" r="8.500" />
      <path d="M7 6v3M13 6v3M5 11q5 7 10 0" />
    </svg>
    <svg width="16" height="20" viewBox="0 0 16 20" fill="none" stroke="#1f78d0" strokeWidth="2">
      <rect x="5" y="1" width="6" height="10" rx="3" fill="#1f78d0" />
      <path d="M1 8q1 7 7 7t7-7M8 15v4M4 19h8" />
    </svg>
    <svg width="20" height="16" viewBox="0 0 20 16" fill="#1f78d0">
      <rect width="20" height="16" rx="2" />
      <path d="M3 4h14M3 8h14" stroke="#fff" strokeWidth="2" strokeDasharray="2 1" />
      <path d="M4 12.500h12" stroke="#fff" strokeWidth="2" />
    </svg>
    <svg width="20" height="18" viewBox="0 0 20 18" fill="#a9b8d6">
      <circle cx="8" cy="4" r="4" />
      <path d="M0 17q0-8 7-8v8z" />
      <path d="M7.500 9.500h12v7h-12zM11 9v8" fill="#fff" stroke="#a9b8d6" />
    </svg>
    <svg width="18" height="17" viewBox="0 0 18 17" fill="#1f78d0">
      <path d="M5 0q4 3 8 0l5 4-3 4-2-1v10H5V7L3 8 0 4z" />
    </svg>
    <svg width="17" height="17" viewBox="0 0 17 17" fill="#1f78d0">
      <path d="M0 0h8v8H0zM0 9h8v8H0zM9 9h8v8H9z" />
      <path d="M10 1h6v6h-6z" fill="none" stroke="#1f78d0" strokeWidth="2" />
    </svg>
  </ImeBar>
);

const BaiduMark = () => (
  <Watermark>
    <WatermarkTop>
      <Bai>Bai</Bai>
      <svg width="102" height="110" viewBox="0 0 102 110">
        <g fill="#fff" fillOpacity="0.78">
          <ellipse cx="15" cy="42" rx="13" ry="16.500" />
          <ellipse cx="39" cy="18" rx="12" ry="17" />
          <ellipse cx="70" cy="20" rx="12.500" ry="16" transform="rotate(8 70 20)" />
          <ellipse cx="89" cy="49" rx="13" ry="16" />
          <path d="M51 45c12 0 17 8 22 17 7 10 20 14 21 29 0 12-9 18-19 17-8-1-16-2-24-1-8 0-16 3-25 1-11-2-17-10-16-22 2-12 14-16 20-25 6-8 10-16 21-16z" />
        </g>
        <text x="20" y="97" fill="#2c2c2c" fontFamily="Inter, sans-serif" fontSize="47" fontWeight="600">
          du
        </text>
      </svg>
      <JingYan>经验</JingYan>
    </WatermarkTop>
    <WatermarkUrl>jingyan.baidu.com</WatermarkUrl>
  </Watermark>
);

const Bottom = () => (
  <Taskbar>
    {tasks.map((t, i) => (
      <TaskButton key={t.name} aria-label={t.name} $first={i === 0} $open={t.open}>
        {t.icon}
      </TaskButton>
    ))}
    <TaskButton $active>
      <PsTile>Ps</PsTile>
    </TaskButton>
    <Tray>
      <TrayIme>
        <Sogou size={20} />
      </TrayIme>
      <svg width="16" height="9" viewBox="0 0 16 9" fill="none" stroke="#fff" strokeWidth="1.300">
        <path d="M1 8l7-7 7 7" />
      </svg>
      <svg width="17" height="17" viewBox="0 0 17 17" fill="none" stroke="#ddd" strokeWidth="1.300">
        <path d="M1 16A15 15 0 0 1 16 1M5 16A11 11 0 0 1 16 5M9 16a7 7 0 0 1 7-7" />
        <circle cx="14" cy="14" r="2" fill="#fff" stroke="none" />
      </svg>
      <svg width="20" height="20" viewBox="0 0 20 20">
        <circle cx="10" cy="10" r="10" fill="#ecec7c" />
        <path d="M4 7h4v4M3 12h5M11 6v6M11 8h5v4M13 6h3M8 15h4" fill="none" stroke="#222" />
      </svg>
      <svg width="21" height="20" viewBox="0 0 21 20" fill="none" stroke="#eee" strokeWidth="1.300">
        <path d="M8 17l1-4 6-12 3 2-6 12zM11 9q8-2 9 0 0 3-6 2M8 12q-7-1-7 3t4 4q3 0 4-2" />
      </svg>
      <Clock>
        <span>17:45</span>
        <span>2021/4/28</span>
      </Clock>
      <svg width="20" height="20" viewBox="0 0 20 20" fill="none" stroke="#fff" strokeWidth="1.300">
        <path d="M1 1h18v15h-6l-3 3-3-3H1z" />
      </svg>
      <ShowDesktop />
    </Tray>
  </Taskbar>
);

const App = () => (
  <Page>
    <GlobalStyle />
    <Header />
    <Workspace>
      <Tools />
      <Document />
      <RightDock />
    </Workspace>
    <Bottom />
    <History />
    <LayerStyle />
    <RecorderPill />
    <Ime />
    <BaiduMark />
  </Page>
);

export default App;
